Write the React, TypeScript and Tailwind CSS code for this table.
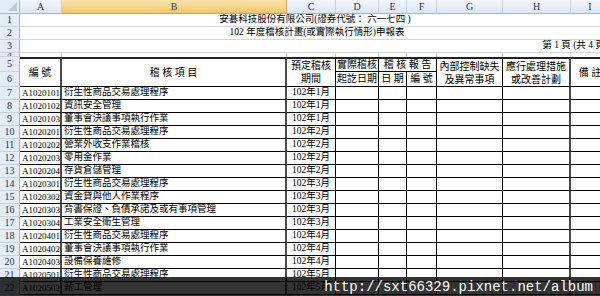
import React from "react";

const F = "font-['Liberation_Serif','Noto_Sans_CJK_TC',serif]";

const rows: [string, string, string][] = [
  ["A1020101", "衍生性商品交易處理程序", "102年1月"],
  ["A1020102", "資訊安全管理", "102年1月"],
  ["A1020103", "董事會決議事項執行作業", "102年1月"],
  ["A1020201", "衍生性商品交易處理程序", "102年2月"],
  ["A1020202", "營業外收支作業稽核", "102年2月"],
  ["A1020203", "零用金作業", "102年2月"],
  ["A1020204", "存貨倉儲管理", "102年2月"],
  ["A1020301", "衍生性商品交易處理程序", "102年3月"],
  ["A1020302", "資金貸與他人作業程序", "102年3月"],
  ["A1020303", "背書保證、負債承諾及或有事項管理", "102年3月"],
  ["A1020304", "工業安全衛生管理", "102年3月"],
  ["A1020401", "衍生性商品交易處理程序", "102年4月"],
  ["A1020402", "董事會決議事項執行作業", "102年4月"],
  ["A1020403", "設備保養維修", "102年4月"],
  ["A1020501", "衍生性商品交易處理程序", "102年5月"],
  ["A1020502", "薪工管理", "102年5月"],
];

function RowHead({ n }: { n: number }) {
  return (
    <div className="flex items-center justify-center overflow-hidden bg-[#e4ecf7] border-r border-b border-r-[#9eb6ce] border-b-[#c5d2e3] text-[10px] leading-none text-[#1e395b]">
      {n}
    </div>
  );
}

function ColHead({ l, sel }: { l: string; sel?: boolean }) {
  return sel ? (
    <div className="flex items-center justify-center bg-gradient-to-b from-[#fbe3ae] to-[#f5c768] border-r border-b border-r-[#e0a850] border-b-[#f29536] text-[10px] leading-none text-[#1e395b]">
      {l}
    </div>
  ) : (
    <div className="flex items-center justify-center bg-gradient-to-b from-[#f3f6fb] to-[#dde6f1] border-r border-b border-r-[#c5d2e3] border-b-[#9eb6ce] text-[10px] leading-none text-[#1e395b]">
      {l}
    </div>
  );
}

export default function App() {
  return (
    <div className={`relative w-[600px] h-[296px] overflow-hidden bg-white ${F} text-black`}>
      <div className="grid w-[610px] grid-cols-[20px_42px_225px_49px_43px_28px_30px_66px_68px_39px] grid-rows-[14px_13px_13px_13px_4px_15px_15px_repeat(16,13px)]">
        {/* header row */}
        <div className="relative bg-[#e4ecf7] border-r border-b border-r-[#9eb6ce] border-b-[#9eb6ce]">
          <div className="absolute right-[2px] bottom-[2px] w-0 h-0 border-l-[9px] border-l-transparent border-b-[9px] border-b-[#b8c9dc]" />
        </div>
        <ColHead l="A" />
        <ColHead l="B" sel />
        <ColHead l="C" />
        <ColHead l="D" />
        <ColHead l="E" />
        <ColHead l="F" />
        <ColHead l="G" />
        <ColHead l="H" />
        <ColHead l="I" />

        {/* row 1 */}
        <RowHead n={1} />
        <div className="col-span-9 flex items-center justify-center border-b border-[#d0d7e5] text-[9.5px] leading-none">
          安碁科技股份有限公司(證券代號： 六一七四 )
        </div>
        {/* row 2 */}
        <RowHead n={2} />
        <div className="col-span-9 flex items-center justify-center border-b border-[#d0d7e5] text-[9.5px] leading-none pl-[4px]">
          102 年度稽核計畫(或實際執行情形)申報表
        </div>
        {/* row 3 */}
        <RowHead n={3} />
        <div className="col-span-9 flex items-center justify-end border-b border-[#d0d7e5] text-[9.5px] leading-none pr-[2px]">
          第 1 頁 (共 4 頁)
        </div>
        {/* row 4 */}
        <RowHead n={4} />
        {Array.from({ length: 9 }).map((_, i) => (
          <div key={i} className="border-r border-[#d0d7e5]" />
        ))}

        {/* row 5-6 header */}
        <RowHead n={5} />
        <div className="row-span-2 flex items-center justify-center border-t-2 border-t-[#222] border-r-2 border-r-[#4a4a4a] border-b border-b-black text-[10px] leading-none">
          編 號
        </div>
        <div className="row-span-2 flex items-center justify-center border-t-2 border-t-[#222] border-r-2 border-r-[#4a4a4a] border-b border-b-black text-[10px] leading-none">
          稽 核 項 目
        </div>
        <div className="row-span-2 flex flex-col items-center justify-center border-t-2 border-t-[#222] border-r border-r-black border-b border-b-black text-[10px] leading-[12.5px]">
          <span>預定稽核</span>
          <span>期間</span>
        </div>
        <div className="flex items-center justify-center border-t-2 border-t-[#222] border-r border-r-black border-b border-b-black text-[10px] leading-none">
          實際稽核
        </div>
        <div className="col-span-2 flex items-center justify-center border-t-2 border-t-[#222] border-r border-r-black border-b border-b-black text-[10px] leading-none">
          稽 核 報 告
        </div>
        <div className="row-span-2 flex flex-col items-center justify-center border-t-2 border-t-[#222] border-r border-r-black border-b border-b-black text-[10px] leading-[13px]">
          <span>內部控制缺失</span>
          <span>及異常事項</span>
        </div>
        <div className="row-span-2 flex flex-col items-center justify-center border-t-2 border-t-[#222] border-r-2 border-r-[#4a4a4a] border-b border-b-black text-[10px] leading-[13px]">
          <span>應行處理措施</span>
          <span>或改善計劃</span>
        </div>
        <div className="row-span-2 flex items-center justify-center border-t-2 border-t-[#222] border-r border-r-black border-b border-b-black text-[10px] leading-none">
          備 註
        </div>
        <RowHead n={6} />
        <div className="flex items-center justify-center border-r border-b border-black text-[10px] leading-none">
          起訖日期
        </div>
        <div className="flex items-center justify-center border-r border-b border-black text-[10px] leading-none">
          日 期
        </div>
        <div className="flex items-center justify-center border-r border-b border-black text-[10px] leading-none">
          編 號
        </div>

        {/* data rows */}
        {rows.map(([code, name, month], i) => (
          <React.Fragment key={code}>
            <RowHead n={i + 7} />
            <div className="flex items-center overflow-hidden whitespace-nowrap pl-[2px] border-r-2 border-r-[#4a4a4a] border-b border-b-black text-[9px] leading-none">
              {code}
            </div>
            <div className="flex items-center overflow-hidden whitespace-nowrap pl-[2px] border-r-2 border-r-[#4a4a4a] border-b border-b-black text-[9.5px] leading-none">
              {name}
            </div>
            <div className="flex items-center justify-center whitespace-nowrap border-r border-b border-black text-[9.5px] leading-none">
              {month}
            </div>
            <div className="border-r border-b border-black" />
            <div className="border-r border-b border-black" />
            <div className="border-r border-b border-black" />
            <div className="border-r border-b border-black" />
            <div className="border-r-2 border-r-[#4a4a4a] border-b border-b-black" />
            <div className="border-r border-b border-black" />
          </React.Fragment>
        ))}
      </div>

      {/* watermark bar */}
      <div className="absolute left-0 right-0 top-[277px] h-[19px] bg-black/80 flex items-center justify-end pr-[7px]">
        <span className="font-['Liberation_Mono',monospace] text-[14px] leading-none text-white">
          http://sxt66329.pixnet.net/album
        </span>
      </div>
    </div>
  );
}
